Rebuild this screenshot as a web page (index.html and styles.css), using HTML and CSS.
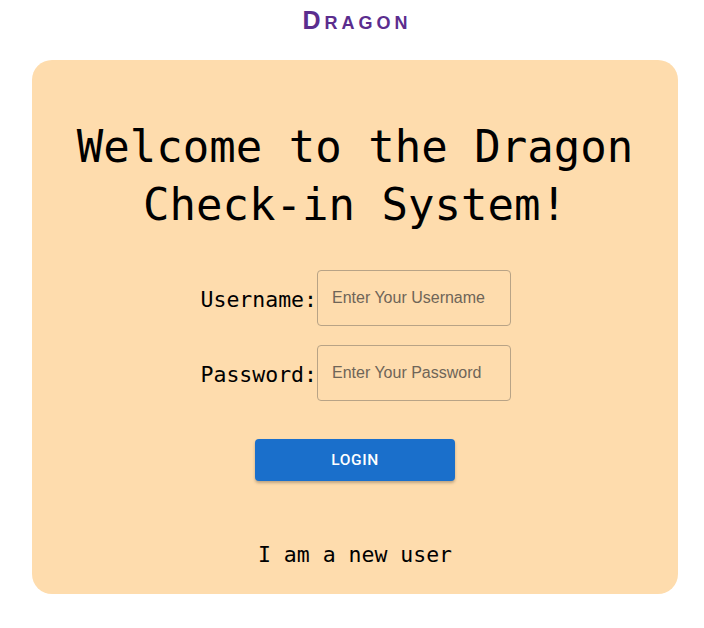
FILE: index.html
```html
<!DOCTYPE html>
<html>
<head>
<meta charset="utf-8">
<link rel="stylesheet" href="styles.css">
</head>
<body>
<div class="page">
  <header class="brand">Dragon</header>
  <main class="card">
    <h1 class="title">Welcome to the Dragon Check-in System!</h1>
    <form class="form">
      <div class="row">
        <label class="label" for="u">Username:</label>
        <input class="input" id="u" type="text" placeholder="Enter Your Username">
      </div>
      <div class="row">
        <label class="label" for="p">Password:</label>
        <input class="input" id="p" type="password" placeholder="Enter Your Password">
      </div>
      <button class="btn" type="button">LOGIN</button>
    </form>
    <p class="newuser">I am a new user</p>
  </main>
</div>
</body>
</html>
```
FILE: styles.css
```css
html, body { margin: 0; padding: 0; background: #fff; }
.page {
  padding: 0 26px 0 32px;
  display: flex;
  flex-direction: column;
}
.brand {
  font-family: "Liberation Sans", Arial, sans-serif;
  font-weight: bold;
  font-variant: small-caps;
  font-size: 25px;
  letter-spacing: 4px;
  color: #5b2d8e;
  text-align: center;
  height: 60px;
  line-height: 40px;
  padding-left: 4px;
}
.card {
  background: #fedcad;
  border-radius: 20px;
  padding: 58px 20px 0;
  height: 476px;
  display: flex;
  flex-direction: column;
  align-items: center;
}
.title {
  margin: 0;
  font-family: "DejaVu Sans Mono", monospace;
  font-weight: normal;
  font-size: 44px;
  line-height: 58px;
  text-align: center;
  color: #000;
  width: 580px;
}
.form {
  margin-top: 36px;
  display: flex;
  flex-direction: column;
  align-items: center;
  gap: 19px;
}
.row {
  display: flex;
  align-items: center;
}
.label {
  font-family: "DejaVu Sans Mono", monospace;
  font-size: 21.5px;
  color: #000;
  width: 118px;
  text-align: right;
  padding-top: 2px;
}
.input {
  box-sizing: border-box;
  width: 194px;
  height: 56px;
  border: 1px solid #b8a386;
  border-radius: 4px;
  background: transparent;
  padding: 0 14px;
  font-family: "Liberation Sans", Arial, sans-serif;
  font-size: 16px;
  color: #000;
  outline: none;
}
.input::placeholder { color: #6f6558; }
.btn {
  margin-top: 19px;
  width: 200px;
  height: 42px;
  border: none;
  border-radius: 4px;
  background: #1a6fcb;
  color: #fff;
  font-family: Roboto, "Liberation Sans", Arial, sans-serif;
  font-weight: 500;
  font-size: 15.5px;
  letter-spacing: 0.6px;
  box-shadow: 0 2px 3px rgba(0,0,0,0.25);
}
.newuser {
  margin: 61px 0 0;
  font-family: "DejaVu Sans Mono", monospace;
  font-size: 21.5px;
  line-height: 26px;
  color: #000;
}
```
